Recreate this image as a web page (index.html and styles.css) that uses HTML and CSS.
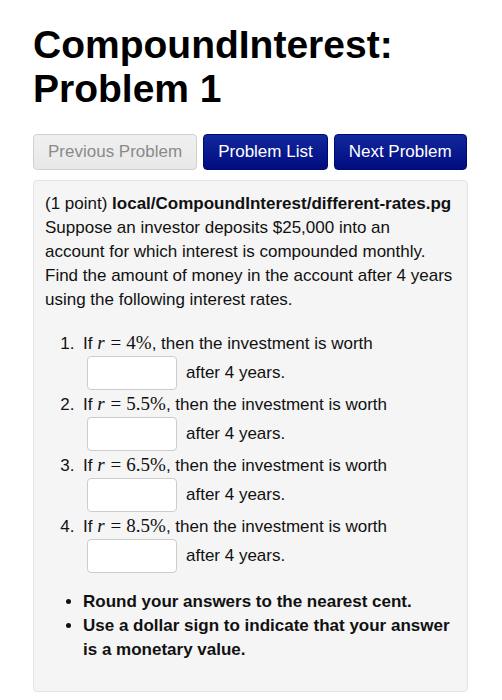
FILE: index.html
```html
<!DOCTYPE html>
<html>
<head>
<meta charset="utf-8">
<link rel="stylesheet" href="styles.css">
</head>
<body>
<div class="page">
  <h1 class="title">CompoundInterest:<br>Problem 1</h1>
  <div class="nav">
    <span class="btn btn-disabled">Previous Problem</span>
    <span class="btn btn-primary">Problem List</span>
    <span class="btn btn-primary">Next Problem</span>
  </div>
  <div class="panel">
    <p class="intro">(1 point) <b>local/CompoundInterest/different-rates.pg</b><br>Suppose an investor deposits $25,000 into an<br>account for which interest is compounded monthly.<br>Find the amount of money in the account after 4 years<br>using the following interest rates.</p>
    <ol class="items">
      <li>If <span class="math"><i>r</i><span class="mo">=</span>4%</span>, then the investment is worth
        <div class="answer"><span class="input"></span><span class="after">after 4 years.</span></div>
      </li>
      <li>If <span class="math"><i>r</i><span class="mo">=</span>5.5%</span>, then the investment is worth
        <div class="answer"><span class="input"></span><span class="after">after 4 years.</span></div>
      </li>
      <li>If <span class="math"><i>r</i><span class="mo">=</span>6.5%</span>, then the investment is worth
        <div class="answer"><span class="input"></span><span class="after">after 4 years.</span></div>
      </li>
      <li>If <span class="math"><i>r</i><span class="mo">=</span>8.5%</span>, then the investment is worth
        <div class="answer"><span class="input"></span><span class="after">after 4 years.</span></div>
      </li>
    </ol>
    <ul class="notes">
      <li>Round your answers to the nearest cent.</li>
      <li>Use a dollar sign to indicate that your answer is a monetary value.</li>
    </ul>
  </div>
</div>
</body>
</html>
```

FILE: styles.css
```css
html, body {
  margin: 0;
  padding: 0;
  background: #ffffff;
}
body {
  font-family: "Liberation Sans", Arial, sans-serif;
  color: #111111;
}
.page {
  padding: 0 34px 0 33px;
}
.title {
  margin: 23px 0 0 0;
  font-size: 39px;
  line-height: 44px;
  font-weight: bold;
  color: #000000;
}
.nav {
  display: flex;
  gap: 6px;
  margin-top: 23px;
}
.btn {
  display: flex;
  align-items: center;
  height: 36px;
  box-sizing: border-box;
  padding: 0 14px;
  font-size: 17px;
  border-radius: 4px;
  border: 1px solid #d0d0d0;
}
.btn-disabled {
  background: linear-gradient(#f0f0f0, #e8e8e8);
  color: #8a8a8a;
}
.btn-primary {
  background: linear-gradient(#12289c, #000c80);
  border-color: #000a6a;
  color: #ffffff;
}
.panel {
  margin-top: 10px;
  background: #f5f5f5;
  border: 1px solid #e3e3e3;
  border-radius: 4px;
  padding: 11px;
  font-size: 17px;
  line-height: 24px;
}
.intro {
  margin: 0;
  white-space: nowrap;
}
.items {
  margin: 19px 0 0;
  padding-left: 38px;
}
.items li {
  line-height: 24px;
}
.items li::marker {
  content: counter(list-item) ".\2002";
}
.math {
  font-family: "Liberation Serif", "Times New Roman", serif;
  font-size: 19px;
}
.math i {
  padding-right: 1px;
}
.mo {
  margin: 0 5px;
}
.answer {
  display: flex;
  align-items: center;
  height: 34px;
  margin: 0 0 2px 4px;
}
.input {
  display: block;
  width: 90px;
  height: 34px;
  box-sizing: border-box;
  background: #ffffff;
  border: 1px solid #cccccc;
  border-radius: 4px;
}
.after {
  margin-left: 9px;
}
.notes {
  margin: 17px 0 18px;
  padding-left: 38px;
  font-weight: bold;
}
```
